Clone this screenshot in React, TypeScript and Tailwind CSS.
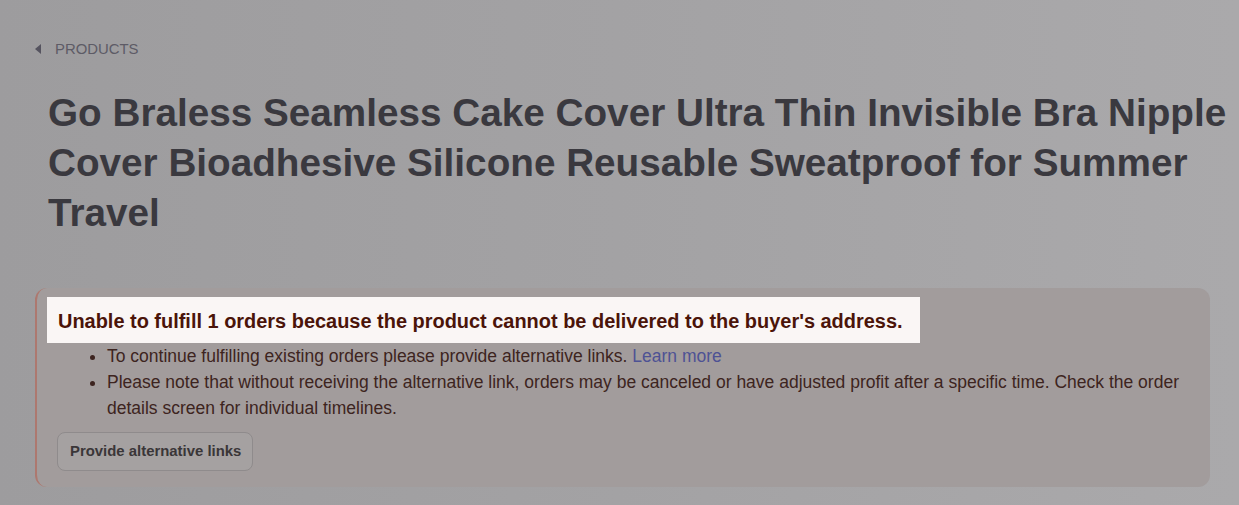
export default function App() {
  return (
    <div
      className="min-h-[505px] w-full bg-gradient-to-r from-[#9d9c9e] via-[#a3a2a4] to-[#aaa9ab] pt-[40px] pb-[19px]"
      style={{ fontFamily: '"Liberation Sans", Arial, sans-serif' }}
    >
      <div className="flex items-center h-[18px] pl-[35px]">
        <svg width="6" height="10" viewBox="0 0 6 10" className="text-[#55535f]">
          <path d="M6 0 L0 5 L6 10 Z" fill="currentColor" />
        </svg>
        <span className="ml-[14px] text-[14.9px] text-[#5d5b66]">PRODUCTS</span>
      </div>

      <h1 className="mt-[30px] pl-[48px] text-[38.7px] leading-[50px] font-bold text-[#3a393f]">
        Go Braless Seamless Cake Cover Ultra Thin Invisible Bra Nipple Cover Bioadhesive Silicone Reusable Sweatproof for Summer Travel
      </h1>

      <div className="mt-[50px] mx-[35px] w-[1175px] rounded-[12px] border-l-2 border-[#ad786f] bg-[#a29c9c] pl-[10px] pr-[20px] pt-[9px] pb-[16px]">
        <div className="inline-block bg-[#faf6f5] pl-[11px] pr-[17px] pt-[2px] h-[46px] leading-[44px] text-[19.95px] font-bold text-[#4b1409]">
          Unable to fulfill 1 orders because the product cannot be delivered to the buyer's address.
        </div>
        <ul className="list-disc pl-[60px] text-[17.5px] leading-[26px] text-[#3d2420]">
          <li>
            To continue fulfilling existing orders please provide alternative links.{' '}
            <a className="text-[#4e5294]">Learn more</a>
          </li>
          <li>
            Please note that without receiving the alternative link, orders may be canceled or have adjusted profit after a specific time. Check the order details screen for individual timelines.
          </li>
        </ul>
        <button className="mt-[11px] ml-[10px] h-[39px] pl-[12px] pr-[11px] rounded-[8px] border border-[#8f8b8c] bg-[#a5a1a1] text-[14.9px] font-bold text-[#3a3638]">
          Provide alternative links
        </button>
      </div>
    </div>
  );
}
